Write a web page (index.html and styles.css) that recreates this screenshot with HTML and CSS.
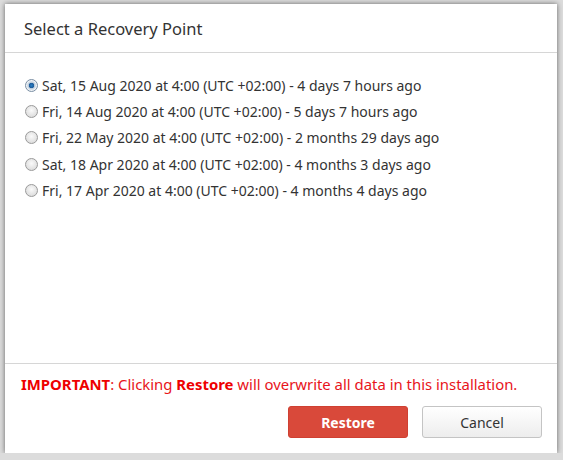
FILE: index.html
```
<!DOCTYPE html>
<html lang="en">
<head>
    <meta charset="UTF-8">
    <title>Select a Recovery Point</title>
    <link rel="stylesheet" href="styles.css">
</head>
<body>
    <div class="dialog">
        <div class="dialog-header">
            <h2>Select a Recovery Point</h2>
        </div>

        <form class="dialog-body" id="recoveryForm">
            <label class="point">
                <input type="radio" name="point" value="1" checked>
                <span>Sat, 15 Aug 2020 at 4:00 (UTC +02:00) - 4 days 7 hours ago</span>
            </label>
            <label class="point">
                <input type="radio" name="point" value="2">
                <span>Fri, 14 Aug 2020 at 4:00 (UTC +02:00) - 5 days 7 hours ago</span>
            </label>
            <label class="point">
                <input type="radio" name="point" value="3">
                <span>Fri, 22 May 2020 at 4:00 (UTC +02:00) - 2 months 29 days ago</span>
            </label>
            <label class="point">
                <input type="radio" name="point" value="4">
                <span>Sat, 18 Apr 2020 at 4:00 (UTC +02:00) - 4 months 3 days ago</span>
            </label>
            <label class="point">
                <input type="radio" name="point" value="5">
                <span>Fri, 17 Apr 2020 at 4:00 (UTC +02:00) - 4 months 4 days ago</span>
            </label>
        </form>

        <div class="dialog-footer">
            <p class="warning"><b>IMPORTANT</b>: Clicking <b>Restore</b> will overwrite all data in this installation.</p>
            <div class="buttons">
                <button class="btn btn-restore" type="submit" form="recoveryForm">Restore</button>
                <button class="btn btn-cancel" type="button">Cancel</button>
            </div>
        </div>
    </div>
</body>
</html>
```

FILE: styles.css
```
body {
    margin: 0;
    padding: 4px 0 0 5px;
    background-color: #dcdcdc;
    font-family: "Noto Sans", "Open Sans", sans-serif;
    color: #333;
}

.dialog {
    width: 552px;
    height: 449px;
    background: #fff;
    box-shadow: 0 0 5px rgba(0, 0, 0, 0.55);
    display: flex;
    flex-direction: column;
}

.dialog-header {
    height: 48px;
    border-bottom: 1px solid #d6d6d6;
    display: flex;
    align-items: center;
    padding-left: 19px;
}

.dialog-header h2 {
    margin: 0;
    font-size: 16.5px;
    font-weight: normal;
    color: #333;
}

.dialog-body {
    flex: 1;
    padding: 19px 0 0 20px;
    margin: 0;
}

.point {
    display: flex;
    align-items: center;
    height: 26.3px;
    font-size: 14px;
    color: #333;
}

/* old-style grey radio buttons */
.point input {
    appearance: none;
    -webkit-appearance: none;
    box-sizing: border-box;
    width: 13px;
    height: 13px;
    margin: 0 4px 0 0;
    border: 1px solid #9a9a9a;
    border-radius: 50%;
    background: radial-gradient(circle at 50% 40%, #fafafa, #d4d4d4);
}

.point input:checked {
    border-color: #7a8ea3;
    background: radial-gradient(circle, #2a7fc4 0, #1c5a99 2.5px, #b9c9d9 3px, #eef2f6 5px);
}

.dialog-footer {
    border-top: 1px solid #d6d6d6;
    padding: 10px 15px 15px 16px;
}

.warning {
    margin: 0;
    font-size: 14.9px;
    color: #e8141b;
    line-height: 20px;
}

.warning b {
    color: #e00;
}

.buttons {
    display: flex;
    justify-content: flex-end;
    gap: 14px;
    margin-top: 12px;
}

.btn {
    width: 120px;
    height: 32px;
    border-radius: 3px;
    font-family: inherit;
    font-size: 14px;
    cursor: pointer;
}

.btn-restore {
    background-color: #d9493a;
    border: 1px solid #cf4032;
    color: #fff;
    font-weight: bold;
}

.btn-cancel {
    background: linear-gradient(#fff, #ededed);
    border: 1px solid #c4c4c4;
    color: #333;
}
```
